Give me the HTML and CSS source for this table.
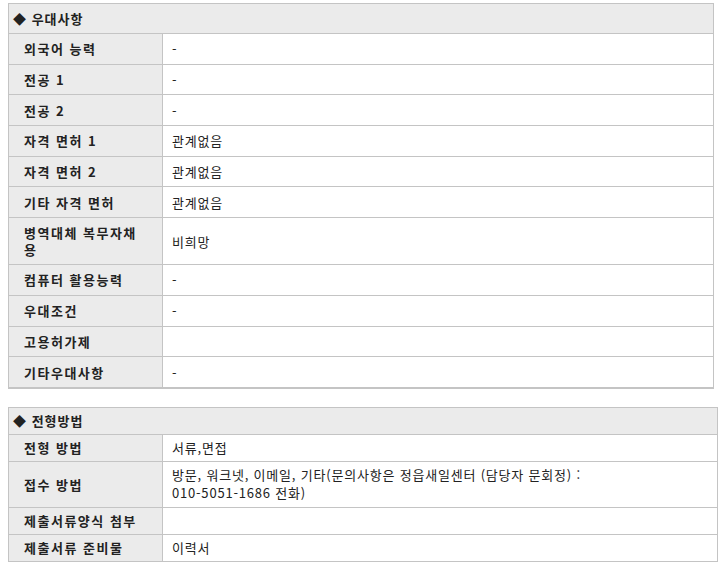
FILE: index.html
```html
<!DOCTYPE html>
<html lang="ko">
<head>
<meta charset="utf-8">
<link rel="stylesheet" href="styles.css">
</head>
<body>
<div class="page">
  <table class="info t1">
    <colgroup><col class="c-lab"><col></colgroup>
    <tr><th colspan="2" class="head">◆ 우대사항</th></tr>
    <tr><td class="lab">외국어 능력</td><td class="val">-</td></tr>
    <tr><td class="lab">전공 1</td><td class="val">-</td></tr>
    <tr><td class="lab">전공 2</td><td class="val">-</td></tr>
    <tr><td class="lab">자격 면허 1</td><td class="val">관계없음</td></tr>
    <tr><td class="lab">자격 면허 2</td><td class="val">관계없음</td></tr>
    <tr><td class="lab">기타 자격 면허</td><td class="val">관계없음</td></tr>
    <tr><td class="lab multi">병역대체 복무자채용</td><td class="val">비희망</td></tr>
    <tr><td class="lab">컴퓨터 활용능력</td><td class="val">-</td></tr>
    <tr><td class="lab">우대조건</td><td class="val">-</td></tr>
    <tr><td class="lab">고용허가제</td><td class="val"></td></tr>
    <tr class="last"><td class="lab">기타우대사항</td><td class="val">-</td></tr>
  </table>

  <table class="info t2">
    <colgroup><col class="c-lab"><col></colgroup>
    <tr><th colspan="2" class="head">◆ 전형방법</th></tr>
    <tr><td class="lab">전형 방법</td><td class="val">서류,면접</td></tr>
    <tr><td class="lab">접수 방법</td><td class="val multi">방문, 워크넷, 이메일, 기타(문의사항은 정읍새일센터 (담당자 문회정) :<br>010-5051-1686 전화)</td></tr>
    <tr><td class="lab">제출서류양식 첨부</td><td class="val"></td></tr>
    <tr><td class="lab">제출서류 준비물</td><td class="val">이력서</td></tr>
  </table>
</div>
</body>
</html>
```

FILE: styles.css
```css
html, body {
  margin: 0;
  padding: 0;
  background: #ffffff;
}
.page {
  padding: 3px 0 0 8px;
  font-family: "Noto Sans CJK KR", "Noto Sans", sans-serif;
  font-size: 13px;
  color: #222222;
}
.info {
  border-collapse: collapse;
  table-layout: fixed;
}
.c-lab {
  width: 154px;
}
.t1 {
  width: 706px;
  margin-bottom: 18px;
}
.t2 {
  width: 710px;
}
.info th, .info td {
  border: 1px solid #c4c4c4;
  line-height: 17px;
  vertical-align: middle;
  overflow: hidden;
}
.head {
  background: #ebebeb;
  text-align: left;
  font-weight: bold;
  padding: 0 0 0 4px;
  letter-spacing: 1px;
}
.t1 .head { height: 29px; }
.t2 .head { height: 26px; }
.lab {
  background: #ebebeb;
  font-weight: bold;
  padding: 0 20px 0 15px;
  letter-spacing: 1.5px;
}
.val {
  background: #ffffff;
  padding: 0 9px;
  letter-spacing: 0.8px;
}
.t1 td { height: 29.7px; }
.t2 td { height: 26px; }
.t1 td.multi { padding-top: 6px; padding-bottom: 6px; height: 34px; }
.t2 td.multi { padding-top: 4px; padding-bottom: 5px; height: auto; line-height: 18px; }
.t1 tr.last td { border-bottom: 2px solid #c4c4c4; }
```
